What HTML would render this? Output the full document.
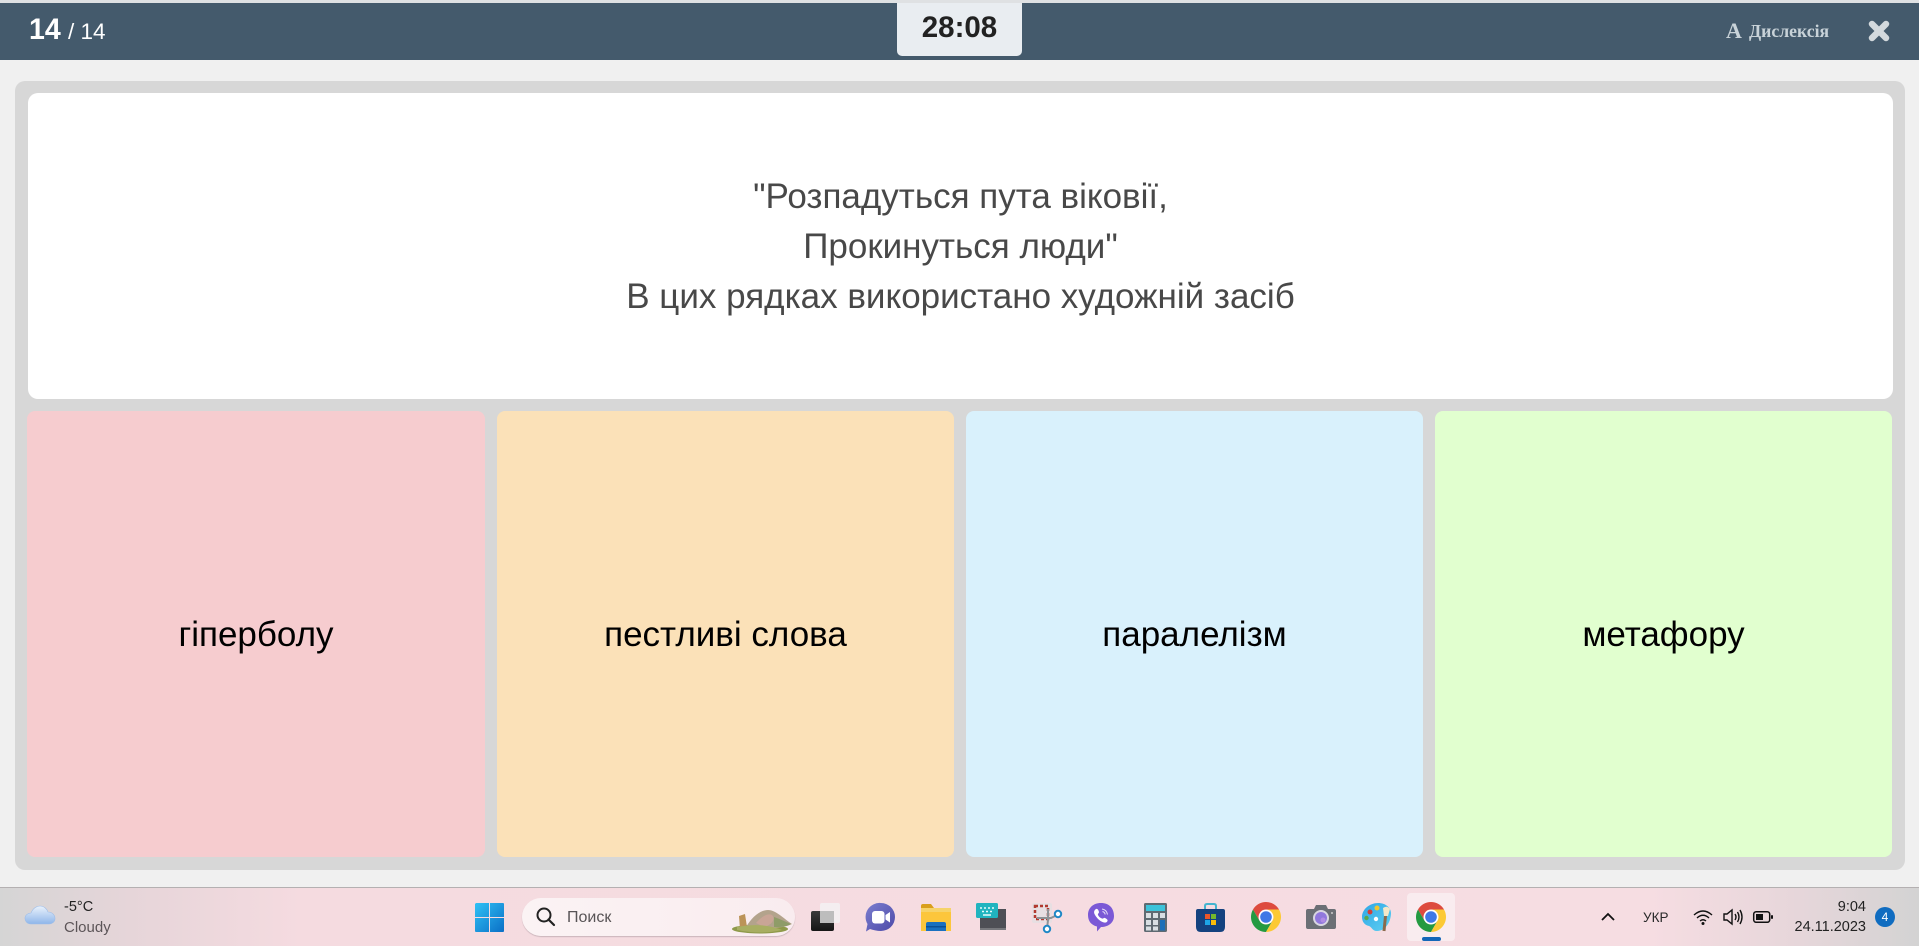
<!DOCTYPE html>
<html lang="uk"><head><meta charset="utf-8"><title>Тест</title>
<style>
html,body{margin:0;padding:0;width:1919px;height:946px;overflow:hidden;background:#f0f0f0;font-family:"Liberation Sans",Arial,sans-serif}
.a{position:absolute}
.q{position:absolute;left:28px;width:1865px;text-align:center;font-size:35px;line-height:50px;color:#484848;white-space:nowrap}
.o{position:absolute;top:411px;height:446px;width:458px;border-radius:8px;display:flex;align-items:center;justify-content:center;font-size:35px;padding-top:2px;box-sizing:border-box;color:#000;white-space:nowrap}
svg{position:absolute;overflow:visible}
.t{position:absolute;white-space:nowrap}
</style></head><body>
<div class="a" style="left:0;top:0;width:1919px;height:3px;background:#dfe1e3"></div>
<div class="a" style="left:0;top:3px;width:1919px;height:57px;background:#445a6c"></div>
<div class="t" style="left:29px;top:12px;font-size:30px;line-height:36px;font-weight:bold;color:#fff;transform-origin:0 50%;transform:scaleX(.95)">14</div>
<div class="t" style="left:68px;top:19px;font-size:22.500px;line-height:26px;color:#fff">/ 14</div>
<div class="a" style="left:897px;top:3px;width:125px;height:53px;background:#e9edf1;border-radius:0 0 5px 5px"></div>
<div class="t" style="left:897px;top:11px;width:125px;text-align:center;font-size:29.500px;line-height:34px;font-weight:bold;color:#222">28:08</div>
<div class="t" style="left:1726px;top:19px;font-family:'Liberation Serif',serif;font-size:22px;line-height:24px;font-weight:bold;color:#c8d2d8">A</div>
<div class="t" style="left:1749px;top:20px;font-family:'Liberation Serif',serif;font-size:17.700px;line-height:22px;color:#c8d2d8;font-weight:bold">Дислексія</div>
<svg style="left:1868px;top:20px" width="22" height="22" viewBox="0 0 22 22"><path d="M4 4L18 18M18 4L4 18" stroke="#d3d9dd" stroke-width="6.500" stroke-linecap="round"/></svg>

<div class="a" style="left:15px;top:81px;width:1890px;height:789px;background:#d7d7d7;border-radius:10px"></div>
<div class="a" style="left:28px;top:93px;width:1865px;height:306px;background:#fff;border-radius:10px"></div>
<div class="q" style="top:172px">"Розпадуться пута віковії,</div>
<div class="q" style="top:222px">Прокинуться люди"</div>
<div class="q" style="top:272px">В цих рядках використано художній засіб</div>
<div class="o" style="left:27px;background:#f6cccf">гіперболу</div>
<div class="o" style="left:497px;width:457px;background:#fbe1b8">пестливі слова</div>
<div class="o" style="left:966px;width:457px;background:#d9f1fc">паралелізм</div>
<div class="o" style="left:1435px;width:457px;background:#e1ffcf">метафору</div>

<div class="a" style="left:0;top:887px;width:1919px;height:59px;background:linear-gradient(90deg,#d5d5d5 0,#e6d5d9 130px,#f5dbe0 300px,#f6dde2 1650px,#e6d6da 1800px,#d3d3d3 1919px);border-top:1px solid #b4b0b1;box-sizing:border-box"></div>
<!-- weather -->
<svg style="left:25px;top:904px" width="30" height="21" viewBox="0 0 30 21"><defs><linearGradient id="cl" x1="0" y1="0" x2="0" y2="1"><stop offset="0" stop-color="#eaf2fc"/><stop offset="1" stop-color="#8fb6ea"/></linearGradient></defs><path d="M6 20C2 20 0 17 0 14.500C0 11 3 9 6 9C8 4 12 2 15 2C19 2 22 5 23 8C27 8 30 11 30 14.500C30 18 27 20 24 20Z" fill="url(#cl)" stroke="#9dbde8" stroke-width=".6"/></svg>
<div class="t" style="left:64px;top:899px;font-size:14.500px;line-height:17px;color:#222">-5°C</div>
<div class="t" style="left:64px;top:919px;font-size:15px;line-height:17px;color:#5c5558">Cloudy</div>
<!-- start -->
<svg style="left:475px;top:903px" width="29" height="29" viewBox="0 0 29 29"><defs><linearGradient id="wn" x1="0" y1="0" x2="1" y2="1"><stop offset="0" stop-color="#2fc1f5"/><stop offset="1" stop-color="#0b6fc6"/></linearGradient></defs><path d="M1 0H14V14H0V1ZM15 0H28Q29 0 29 1V14H15ZM0 15H14V29H1Q0 29 0 28ZM15 15H29V28Q29 29 28 29H15Z" fill="url(#wn)"/></svg>
<!-- search -->
<div class="a" style="left:522px;top:898px;width:273px;height:38px;border-radius:19px;background:linear-gradient(90deg,#fbf3f4,#f9ecef);box-shadow:0 1px 1px #c9b4ba"></div>
<svg style="left:536px;top:907px" width="19" height="19" viewBox="0 0 19 19"><circle cx="8" cy="8" r="6.500" fill="none" stroke="#222" stroke-width="2"/><path d="M12.500 12.500L18 18" stroke="#222" stroke-width="2.200" stroke-linecap="round"/></svg>
<div class="t" style="left:567px;top:908px;font-size:16px;line-height:19px;color:#585456">Поиск</div>
<svg style="left:732px;top:909px" width="60" height="25" viewBox="0 0 60 25"><ellipse cx="28" cy="20" ry="4.500" rx="28" fill="#8f9a4a"/><path d="M14 18C20 8 28 1 36 1C44 1 52 10 60 15C52 19 40 19 30 20C24 20 18 20 14 18Z" fill="#b3a38c"/><path d="M24 14C30 7 36 4 40 6C44 10 40 16 32 18Z" fill="#c9a596"/><path d="M42 8C48 10 54 13 59 15C54 18 48 18 42 18Z" fill="#8f9c68"/><path d="M7 7L13 5L15 18L8 20Z" fill="#bb9358"/><path d="M5 18Q30 13 50 21Q30 26 5 21Z" fill="#a8ae62"/></svg>
<!-- task view -->
<div class="a" style="left:820px;top:903px;width:20px;height:20px;background:#f4eef0;border-radius:2px"></div>
<div class="a" style="left:811px;top:911px;width:23px;height:20px;background:linear-gradient(#3a3a3a,#161616);border-radius:2px"></div>
<div class="a" style="left:820px;top:911px;width:14px;height:12px;background:#bdbdbd"></div>
<!-- meet -->
<svg style="left:866px;top:903px" width="29" height="29" viewBox="0 0 29 29"><defs><linearGradient id="mt" x1="0" y1="0" x2="1" y2="1"><stop offset="0" stop-color="#7b7ecf"/><stop offset="1" stop-color="#4c49a8"/></linearGradient></defs><path d="M15 0A14 14 0 1 1 15 28C11 28 7 27 4 26L0 28.500L1.500 21A14 14 0 0 1 15 0Z" fill="url(#mt)"/><rect x="6" y="8" width="12.500" height="12.500" rx="3" fill="#fff"/><path d="M19.500 12L24 9V19.500L19.500 16.500Z" fill="#fff"/></svg>
<!-- folder -->
<svg style="left:921px;top:904px" width="30" height="27" viewBox="0 0 30 27"><path d="M0 2Q0 0 2 0H10L13 4H0Z" fill="#d99f1c"/><path d="M0 4H29Q30 4 30 5V27H0Z" fill="#fcc63c"/><path d="M0 4H30V8H0Z" fill="#f6d36a"/><path d="M5 27V20Q5 18 7 18H23Q25 18 25 20V27Z" fill="#1a70c0"/><rect x="5" y="22" width="20" height="1.500" fill="#0c4f96"/></svg>
<!-- keyboard -->
<svg style="left:976px;top:903px" width="30" height="28" viewBox="0 0 30 28"><rect x="4" y="6" width="26" height="21" fill="#4e4f55"/><rect x="4" y="25" width="26" height="2" fill="#77787c"/><rect x="0" y="0" width="22" height="15" rx="1.500" fill="#21b4bf"/><path d="M4 5h2M8 5h2M12 5h2M16 5h2M6 8.500h2M10 8.500h2M14 8.500h2M7 12h8" stroke="#e8fbfc" stroke-width="1.500"/></svg>
<!-- snip -->
<svg style="left:1032px;top:903px" width="30" height="30" viewBox="0 0 30 30"><rect x="0" y="0" width="20" height="20" rx="2" fill="#e7dfe2"/><rect x="3" y="3" width="13" height="13" fill="none" stroke="#b23a30" stroke-width="2.500" stroke-dasharray="3 2"/><path d="M16 6V17L15 26M5 15L19 15L25 12" stroke="#8d9296" stroke-width="2" fill="none"/><circle cx="26" cy="11" r="3.200" fill="#fff" stroke="#1f88c6" stroke-width="2"/><circle cx="15" cy="26" r="3.200" fill="#fff" stroke="#1f88c6" stroke-width="2"/></svg>
<!-- viber -->
<svg style="left:1088px;top:903px" width="26" height="29" viewBox="0 0 26 29"><path d="M13 0C21 0 26 5 26 13C26 20 20 24 13 24L9 28.500V23.500C3 22 0 18 0 12C0 5 5 0 13 0Z" fill="#7b59d6"/><path d="M8 6C9.500 5.500 10.500 7 11 9C11 10.500 9.500 10.500 10 12C11 14 12.500 15 14 15.500C15.500 16 15.500 14.500 17 15C19 16 20 17 19.500 18C18.500 20 16.500 20 14 18.800C10.500 17 8 14 6.500 11C5.500 8.500 6.500 7 8 6Z" fill="#fff"/><path d="M14 6C17 6.500 19 8.500 19.500 11.500M14.500 8.500C16 9 17 10 17.200 11.500" stroke="#e4dbf7" fill="none" stroke-width="1"/></svg>
<!-- calc -->
<svg style="left:1144px;top:903px" width="23" height="29" viewBox="0 0 23 29"><rect width="23" height="29" rx="1.500" fill="#5f6a72"/><rect x="2" y="2" width="19" height="6" fill="#3cc3da"/><g fill="#d9dfe3"><rect x="2" y="10" width="5" height="5"/><rect x="9" y="10" width="5" height="5"/><rect x="2" y="17" width="5" height="5"/><rect x="9" y="17" width="5" height="5"/><rect x="2" y="23.500" width="5" height="4"/><rect x="9" y="23.500" width="5" height="4"/></g><rect x="16" y="10" width="5" height="5" fill="#d9dfe3"/><rect x="16" y="17" width="5" height="10.500" fill="#1c6fb8"/></svg>
<!-- store -->
<svg style="left:1196px;top:903px" width="29" height="29" viewBox="0 0 29 29"><path d="M9 6V3Q9 1 11 1H18Q20 1 20 3V6" fill="none" stroke="#45b4cf" stroke-width="2"/><path d="M2 6H27Q29 6 29 8V24Q29 29 24 29H5Q0 29 0 24V8Q0 6 2 6Z" fill="#14427f"/><rect x="9" y="11" width="5" height="5" fill="#e8562a"/><rect x="15" y="11" width="5" height="5" fill="#74b82c"/><rect x="9" y="17" width="5" height="5" fill="#1ea6e6"/><rect x="15" y="17" width="5" height="5" fill="#fbbc09"/></svg>
<!-- chrome 1 -->
<svg style="left:1251px;top:902px" width="30" height="30" viewBox="0 0 30 30"><path d="M2 7.500A15 15 0 0 1 28 7.500H15A7.500 7.500 0 0 0 8.500 18.750Z" fill="#dd4b3e"/><path d="M2 7.500L8.500 18.750A7.500 7.500 0 0 0 21.500 18.750L15 30A15 15 0 0 1 2 7.500Z" fill="#249a41"/><path d="M28 7.500H15A7.500 7.500 0 0 1 21.500 18.750L15 30A15 15 0 0 0 28 7.500Z" fill="#fcc934"/><circle cx="15" cy="15" r="7.200" fill="#fff"/><circle cx="15" cy="15" r="5.800" fill="#3f78e6"/></svg>
<!-- camera -->
<svg style="left:1306px;top:905px" width="30" height="24" viewBox="0 0 30 24"><path d="M2 4H8L10 0H20L22 4H28Q30 4 30 6V22Q30 24 28 24H2Q0 24 0 22V6Q0 4 2 4Z" fill="#6b6f75"/><circle cx="15" cy="13" r="8" fill="#d9d6e2"/><circle cx="15" cy="13" r="6" fill="#9178dd"/><circle cx="17" cy="15" r="2.500" fill="#b18be5"/><circle cx="26" cy="8" r="1" fill="#ccc"/></svg>
<!-- paint -->
<svg style="left:1362px;top:903px" width="30" height="29" viewBox="0 0 30 29"><defs><linearGradient id="pa" x1="0" y1="0" x2="1" y2="1"><stop offset="0" stop-color="#2ea6e6"/><stop offset="1" stop-color="#5fd0f2"/></linearGradient></defs><path d="M16 0C24 0 29 5 29 10C29 18 24 28 15 28C10 28 10 24 7 23C2 22 0 18 0 14C0 6 8 0 16 0Z" fill="url(#pa)"/><circle cx="8" cy="9" r="2.500" fill="#d2403a"/><circle cx="4.500" cy="15" r="2.200" fill="#5ba84a"/><circle cx="15" cy="5" r="2.500" fill="#f0c52f"/><circle cx="14" cy="16" r="2.200" fill="#fff"/><path d="M24 8L22 28" stroke="#8b6a4c" stroke-width="3"/><path d="M21 5Q25 2 28 6L26 13H22Z" fill="#f3e7c9"/></svg>
<!-- active chrome -->
<div class="a" style="left:1407px;top:893px;width:48px;height:48px;background:#f9ecef;border-radius:4px"></div>
<svg style="left:1416px;top:902px" width="30" height="30" viewBox="0 0 30 30"><path d="M2 7.500A15 15 0 0 1 28 7.500H15A7.500 7.500 0 0 0 8.500 18.750Z" fill="#dd4b3e"/><path d="M2 7.500L8.500 18.750A7.500 7.500 0 0 0 21.500 18.750L15 30A15 15 0 0 1 2 7.500Z" fill="#249a41"/><path d="M28 7.500H15A7.500 7.500 0 0 1 21.500 18.750L15 30A15 15 0 0 0 28 7.500Z" fill="#fcc934"/><circle cx="15" cy="15" r="7.200" fill="#fff"/><circle cx="15" cy="15" r="5.800" fill="#3f78e6"/></svg>
<div class="a" style="left:1422px;top:937px;width:19px;height:4px;background:#1467b8;border-radius:2px"></div>
<!-- tray -->
<svg style="left:1601px;top:912px" width="14" height="9" viewBox="0 0 14 9"><path d="M1 8L7 2L13 8" fill="none" stroke="#111" stroke-width="1.800"/></svg>
<div class="t" style="left:1643px;top:910px;font-size:13.500px;line-height:16px;color:#2a2a2a">УКР</div>
<svg style="left:1693px;top:909px" width="20" height="16" viewBox="0 0 20 16"><path d="M1 6Q10 -2 19 6M4 9Q10 3.500 16 9M7 12Q10 9.500 13 12" fill="none" stroke="#111" stroke-width="1.400"/><circle cx="10" cy="14.500" r="1.500" fill="#111"/></svg>
<svg style="left:1723px;top:908px" width="20" height="18" viewBox="0 0 20 18"><path d="M1 6H4L9 2V16L4 12H1Z" fill="none" stroke="#111" stroke-width="1.400"/><path d="M12 6Q14 9 12 12M14.500 4Q17.500 9 14.500 14M17 2Q21 9 17 16" fill="none" stroke="#111" stroke-width="1.400"/></svg>
<svg style="left:1753px;top:911px" width="20" height="12" viewBox="0 0 20 12"><rect x=".7" y=".7" width="16" height="10.600" rx="2.500" fill="none" stroke="#111" stroke-width="1.500"/><rect x="3" y="3" width="7" height="6" fill="#111"/><rect x="18" y="4" width="2" height="4" rx="1" fill="#111"/></svg>
<div class="t" style="left:1766px;top:899px;width:100px;text-align:right;font-size:14.500px;line-height:17px;color:#222">9:04</div>
<div class="t" style="left:1766px;top:919px;width:100px;text-align:right;font-size:14.500px;line-height:17px;color:#222">24.11.2023</div>
<div class="a" style="left:1875px;top:907px;width:20px;height:20px;border-radius:50%;background:#0f6cc0;color:#fff;font-size:12px;line-height:20px;text-align:center">4</div>
</body></html>
